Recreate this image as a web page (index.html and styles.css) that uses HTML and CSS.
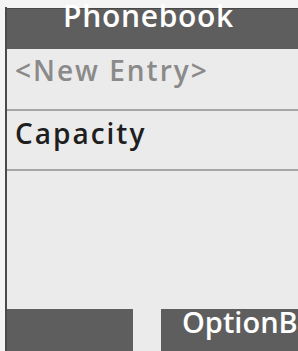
FILE: index.html
```html
<!DOCTYPE html>
<html lang="en">
<head>
  <meta charset="UTF-8"/>
  <meta name="viewport" content="width=device-width,initial-scale=1"/>
  <title>Phonebook</title>
  <link rel="stylesheet" href="styles.css">
</head>
<body>
  <div class="screen">
    <div class="title">Phonebook</div>
    <div class="list">
      <div class="row new">&lt;New Entry&gt;</div>
      <div class="row">Capacity</div>
    </div>
    <div class="softkeys">
      <div class="key"></div>
      <div class="key right">OptionB</div>
    </div>
  </div>
</body>
</html>
```

FILE: styles.css
```css
*{box-sizing:border-box;margin:0;padding:0}
body{background:#f4f4f4;font-family:'Open Sans',sans-serif;font-weight:600;overflow:hidden}
.screen{margin-left:5px;height:351px;border-left:2px solid;border-image:linear-gradient(transparent 8px,#4a4a4a 8px) 1;background:linear-gradient(#f4f4f4 8px,#ebebeb 8px);display:flex;flex-direction:column}
.title{height:49px;background:linear-gradient(#f4f4f4 8px,#484848 8px,#484848 9px,#5e5e5e 9px);color:#fff;font-size:30px;line-height:31px;padding-left:56px;letter-spacing:.7px}
.list{flex:1}
.row{border-bottom:2px solid #a6a6a6;font-size:28px;padding-left:8px;letter-spacing:2px}
.row.new{height:62px;line-height:42px;color:#8a8a8a}
.row:not(.new){height:60px;line-height:44px;color:#1e1e1e}
.softkeys{height:42px;display:flex;gap:28px}
.key{width:126px;background:#5e5e5e}
.key.right{flex:1;color:#fff;font-size:29px;padding-left:21px;overflow:hidden;white-space:nowrap;line-height:26px}
```
